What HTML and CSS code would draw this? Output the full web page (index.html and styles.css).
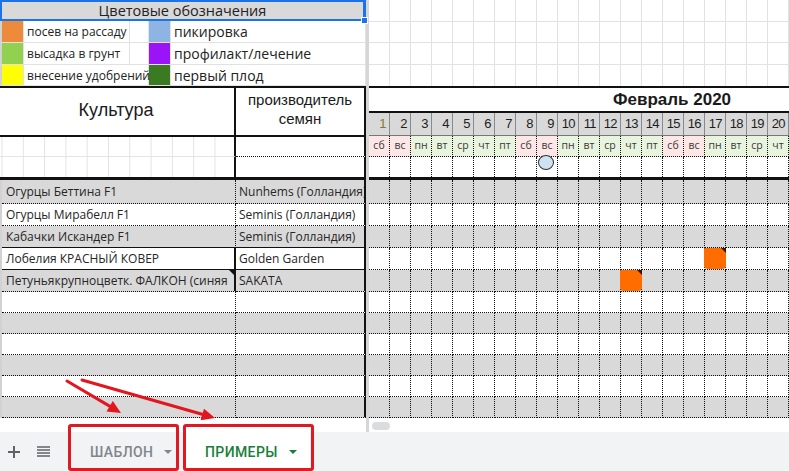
FILE: index.html
```html
<!DOCTYPE html>
<html lang="ru">
<head>
<meta charset="utf-8">
<title>Календарь посевов</title>
<link rel="stylesheet" href="styles.css">
</head>
<body>
<div class="sheet">
  <div class="left">
    <div class="lhead">Цветовые обозначения<span class="handle"></span></div>
    <div class="lrow h22"><span class="sw sw-orange"></span><span class="lt lt-cut">посев на рассаду</span><span class="sw sw-blue"></span><span class="lt2">пикировка</span></div>
    <div class="lrow h22"><span class="sw sw-green"></span><span class="lt lt-cut">высадка в грунт</span><span class="sw sw-purple"></span><span class="lt2">профилакт/лечение</span></div>
    <div class="lrow h21"><span class="sw sw-yellow"></span><span class="lt">внесение удобрений</span><span class="sw sw-dkgreen"></span><span class="lt2">первый плод</span></div>
    <div class="hdr"><div class="nm">Культура</div><div class="pd">производитель<br>семян</div></div>
    <div class="sub sub1"><div class="nm"></div><div class="pd"></div></div>
    <div class="sub sub2"><div class="nm"></div><div class="pd"></div></div>
    <div class="row gray r24"><div class="nm">Огурцы Беттина F1</div><div class="pd">Nunhems (Голландия)</div></div>
    <div class="row r22"><div class="nm">Огурцы Мирабелл F1</div><div class="pd">Seminis (Голландия)</div></div>
    <div class="row gray r22 solid-b"><div class="nm">Кабачки Искандер F1</div><div class="pd">Seminis (Голландия)</div></div>
    <div class="row r22 solid"><div class="nm">Лобелия КРАСНЫЙ КОВЕР</div><div class="pd">Golden Garden</div></div>
    <div class="row gray r22 solid-side"><div class="nm note-cell">Петуньякрупноцветк. ФАЛКОН (синяя</div><div class="pd">SAKATA</div></div>
    <div class="row r21"><div class="nm"></div><div class="pd"></div></div>
    <div class="row gray r21"><div class="nm"></div><div class="pd"></div></div>
    <div class="row r21"><div class="nm"></div><div class="pd"></div></div>
    <div class="row gray r21"><div class="nm"></div><div class="pd"></div></div>
    <div class="row r21"><div class="nm"></div><div class="pd"></div></div>
    <div class="row gray r21"><div class="nm"></div><div class="pd"></div></div>
  </div>
  <div class="divider"></div>
  <div class="right">
    <div class="grow blank h22"><i></i><i></i><i></i><i></i><i></i><i></i><i></i><i></i><i></i><i></i><i></i><i></i><i></i><i></i><i></i><i></i><i></i><i></i><i></i><i></i></div>
    <div class="grow blank h21"><i></i><i></i><i></i><i></i><i></i><i></i><i></i><i></i><i></i><i></i><i></i><i></i><i></i><i></i><i></i><i></i><i></i><i></i><i></i><i></i></div>
    <div class="grow blank h22"><i></i><i></i><i></i><i></i><i></i><i></i><i></i><i></i><i></i><i></i><i></i><i></i><i></i><i></i><i></i><i></i><i></i><i></i><i></i><i></i></div>
    <div class="grow blank h21 nob"><i></i><i></i><i></i><i></i><i></i><i></i><i></i><i></i><i></i><i></i><i></i><i></i><i></i><i></i><i></i><i></i><i></i><i></i><i></i><i></i></div>
    <div class="month"><span>Февраль 2020</span></div>
    <div class="grow days"><i class="first">1</i><i>2</i><i>3</i><i>4</i><i>5</i><i>6</i><i>7</i><i>8</i><i>9</i><i>10</i><i>11</i><i>12</i><i>13</i><i>14</i><i>15</i><i>16</i><i>17</i><i>18</i><i>19</i><i>20</i></div>
    <div class="grow wdays"><i class="we">сб</i><i class="we">вс</i><i>пн</i><i>вт</i><i>ср</i><i>чт</i><i>пт</i><i class="we">сб</i><i class="we">вс</i><i>пн</i><i>вт</i><i>ср</i><i>чт</i><i>пт</i><i class="we">сб</i><i class="we">вс</i><i>пн</i><i>вт</i><i>ср</i><i>чт</i></div>
    <div class="grow marks"><i></i><i></i><i></i><i></i><i></i><i></i><i></i><i></i><i><b class="dot"></b></i><i></i><i></i><i></i><i></i><i></i><i></i><i></i><i></i><i></i><i></i><i></i></div>
    <div class="grow data gray r24"><i></i><i></i><i></i><i></i><i></i><i></i><i></i><i></i><i></i><i></i><i></i><i></i><i></i><i></i><i></i><i></i><i></i><i></i><i></i><i></i></div>
    <div class="grow data r22"><i></i><i></i><i></i><i></i><i></i><i></i><i></i><i></i><i></i><i></i><i></i><i></i><i></i><i></i><i></i><i></i><i></i><i></i><i></i><i></i></div>
    <div class="grow data gray r22"><i></i><i></i><i></i><i></i><i></i><i></i><i></i><i></i><i></i><i></i><i></i><i></i><i></i><i></i><i></i><i></i><i></i><i></i><i></i><i></i></div>
    <div class="grow data r22"><i></i><i></i><i></i><i></i><i></i><i></i><i></i><i></i><i></i><i></i><i></i><i></i><i></i><i></i><i></i><i></i><i><b class="sow"></b></i><i></i><i></i><i></i></div>
    <div class="grow data gray r22"><i></i><i></i><i></i><i></i><i></i><i></i><i></i><i></i><i></i><i></i><i></i><i></i><i><b class="sow"></b></i><i></i><i></i><i></i><i></i><i></i><i></i><i></i></div>
    <div class="grow data r21"><i></i><i></i><i></i><i></i><i></i><i></i><i></i><i></i><i></i><i></i><i></i><i></i><i></i><i></i><i></i><i></i><i></i><i></i><i></i><i></i></div>
    <div class="grow data gray r21"><i></i><i></i><i></i><i></i><i></i><i></i><i></i><i></i><i></i><i></i><i></i><i></i><i></i><i></i><i></i><i></i><i></i><i></i><i></i><i></i></div>
    <div class="grow data r21"><i></i><i></i><i></i><i></i><i></i><i></i><i></i><i></i><i></i><i></i><i></i><i></i><i></i><i></i><i></i><i></i><i></i><i></i><i></i><i></i></div>
    <div class="grow data gray r21"><i></i><i></i><i></i><i></i><i></i><i></i><i></i><i></i><i></i><i></i><i></i><i></i><i></i><i></i><i></i><i></i><i></i><i></i><i></i><i></i></div>
    <div class="grow data r21"><i></i><i></i><i></i><i></i><i></i><i></i><i></i><i></i><i></i><i></i><i></i><i></i><i></i><i></i><i></i><i></i><i></i><i></i><i></i><i></i></div>
    <div class="grow data gray r21"><i></i><i></i><i></i><i></i><i></i><i></i><i></i><i></i><i></i><i></i><i></i><i></i><i></i><i></i><i></i><i></i><i></i><i></i><i></i><i></i></div>
  </div>
</div>
<div class="hscroll">
  <div class="hs-left"></div>
  <div class="divider"></div>
  <div class="hs-right"><span class="thumb"></span></div>
</div>
<div class="tabbar">
  <span class="icon plus"><svg width="12" height="12" viewBox="0 0 12 12"><path d="M6 0v12M0 6h12" stroke="#5f6368" stroke-width="2"/></svg></span>
  <span class="icon list"><svg width="13" height="11" viewBox="0 0 13 11"><path d="M0 1h13M0 4h13M0 7h13M0 10h13" stroke="#5f6368" stroke-width="1.6"/></svg></span>
  <div class="tab tab-off">ШАБЛОН<span class="caret"></span></div>
  <div class="tab tab-on">ПРИМЕРЫ<span class="caret"></span></div>
</div>
<div class="callout c1"></div>
<div class="callout c2"></div>
<svg class="arrows" width="789" height="471" viewBox="0 0 789 471">
  <g stroke="#e3161f" stroke-width="3" stroke-linecap="round" fill="#e3161f">
    <line x1="67" y1="381" x2="110" y2="406.4"/>
    <line x1="82" y1="380" x2="203" y2="414.5"/>
  </g>
  <g fill="#e3161f">
    <polygon points="121,413 106.5,411.5 112.8,401"/>
    <polygon points="215,418 200.6,420.2 204,408.8"/>
  </g>
</svg>
</body>
</html>
```
FILE: styles.css
```css
* { box-sizing: border-box; margin: 0; padding: 0; }
body {
  width: 789px; height: 471px; overflow: hidden; position: relative;
  background: #fff; color: #222;
  font-family: "Open Sans", "Noto Sans", sans-serif;
}
.sheet { display: flex; height: 419px; overflow: hidden; }
.left { width: 366px; flex: none; display: flex; flex-direction: column; }
.divider { width: 3px; flex: none; background: #d6d6d6; }
.right { width: 420px; flex: none; display: flex; flex-direction: column; }

/* legend */
.lhead {
  height: 21px; flex: none; position: relative;
  background: #d9d9d9; border: 2px solid #1a73e8; border-right-width: 3px;
  font-size: 14.5px; line-height: 17px; text-align: center; color: #222;
}
.handle {
  position: absolute; right: -5px; bottom: -5px; width: 7px; height: 7px;
  background: #1a73e8; border: 1px solid #fff;
}
.lrow {
  display: grid; grid-template-columns: 22px 125px 22px 1fr; flex: none;
  border-left: 2px solid #d2d2d2; border-bottom: 1px solid #e2e2e2;
}
.h22 { height: 22px; }
.h21 { height: 21px; }
.lrow > span { border-right: 1px solid #e2e2e2; white-space: nowrap; overflow: visible; display: flex; align-items: center; }
.lt { font-size: 12px; letter-spacing: 0; padding-left: 3px; position: relative; z-index: 1; }
.lt-cut { background: linear-gradient(to right, transparent 105px, #e2e2e2 105px, #e2e2e2 106px, transparent 106px); }
.lt2 { font-size: 14px; padding-left: 3px; }
.sw-orange { background: #ee8a3c; }
.sw-green { background: #92d050; }
.sw-yellow { background: #ffff00; }
.sw-blue { background: #8db4e2; }
.sw-purple { background: #9b14f7; }
.sw-dkgreen { background: #3a7a20; }

/* headers */
.hdr {
  height: 51px; flex: none; display: flex;
  border-top: 2px solid #111; border-bottom: 2px solid #111;
  font-family: "Liberation Sans", Arial, sans-serif; color: #1a1a1a;
}
.nm { width: 236px; flex: none; }
.pd { flex: 1; border-right: 2px solid #111; }
.hdr .nm { border-right: 2px solid #111; font-size: 18px; display: flex; align-items: center; justify-content: center; padding-right: 2px; padding-bottom: 3px; }
.hdr .pd { font-size: 15px; text-align: center; line-height: 19px; padding-top: 2px; }
.sub { flex: none; display: flex; }
.sub .nm {
  border-right: 2px solid #111;
  background-image: linear-gradient(to right, #e2e2e2 1px, transparent 1px);
  background-size: 21.3px 100%; background-position: 1.5px 0;
}
.sub1 { height: 20px; }
.sub1 .nm { border-bottom: 1px solid #e4e4e4; }
.sub1 .pd { border-bottom: 1px dotted #111; }
.sub2 { height: 23px; border-bottom: 3px solid #111; }

/* data rows (left) */
.row { flex: none; display: flex; font-size: 12px; color: #262626; border-left: 2px solid #d2d2d2; }
.row .nm, .row .pd {
  border-bottom: 1px dotted #111; white-space: nowrap; overflow: hidden;
  display: flex; align-items: center;
}
.row .nm { width: 234px; border-right: 1px dotted #111; padding-left: 4px; }
.row .pd { padding-left: 3px; }
.row.solid .nm { border-right: 2px solid #111; border-bottom: 1px solid #111; }
.row.solid .pd { border-bottom: 1px solid #111; }
.row.solid-b .nm { border-bottom: 1px solid #111; }
.row.solid-b .pd { border-bottom: 1px solid #111; }
.row.solid-side .nm { border-right: 2px solid #111; }
.note-cell { position: relative; }
.note-cell::after {
  content: ""; position: absolute; right: 0; top: 0;
  border-top: 5px solid #111; border-left: 5px solid transparent;
}
.gray { background: #d9d9d9; }
.r24 { height: 24px; }
.r22 { height: 22px; }
.r21 { height: 21px; }

/* right pane grid */
.grow { display: grid; grid-template-columns: repeat(20, 21px); flex: none; }
.grow i { font-style: normal; display: block; }
.blank i { border-right: 1px solid #e2e2e2; border-bottom: 1px solid #e2e2e2; }
.blank.nob i { border-bottom: 0; }
.month {
  height: 27px; flex: none; border-top: 2px solid #111; border-bottom: 2px solid #111;
  font-family: "Liberation Sans", Arial, sans-serif; font-weight: bold; font-size: 17px;
  display: flex; align-items: center; padding-left: 244px; color: #1a1a1a;
}
.days { height: 23px; background: #d9d9d9; border-bottom: 1px solid #777; }
.days i {
  border-right: 1px solid #8a8a8a; text-align: right; padding-right: 3px;
  font-family: "Liberation Sans", Arial, sans-serif; font-size: 13px; line-height: 22px;
  letter-spacing: -0.6px; color: #1d1d1d;
}
.days i.first { color: #8a7633; }
.wdays { height: 21px; }
.wdays i {
  background: #e9f4df; border-right: 1px dotted #111; border-bottom: 1px dotted #111;
  font-size: 10.5px; line-height: 19px; text-align: center; color: #3a3a3a;
}
.wdays i.we { background: #fde6e6; }
.marks { height: 23px; border-bottom: 3px solid #111; }
.marks i { border-right: 1px dotted #111; }
.dot {
  display: block; width: 16px; height: 15px; margin: -2px 0 0 1px;
  border-radius: 50%; background: #cfe2f3; border: 1px solid #333;
}
.data i { border-right: 1px dotted #111; border-bottom: 1px dotted #111; }
.sow {
  display: block; height: 100%; margin-left: -1px; margin-right: -1px;
  background: #ff6d00; border-radius: 1px 1px 4px 4px; position: relative;
}
.sow::after {
  content: ""; position: absolute; right: 0; top: 0;
  border-top: 5px solid #3a1300; border-left: 5px solid transparent;
}

/* scroll strip */
.hscroll { height: 13px; display: flex; background: #fff; }
.hs-left { width: 366px; flex: none; }
.hs-right { flex: 1; padding: 3px 0 0 3px; }
.thumb { display: block; width: 18px; height: 8px; border-radius: 4px; background: #dadce0; }

/* tab bar */
.tabbar {
  height: 39px; background: #f1f3f4; display: flex; align-items: stretch;
  font-family: Roboto, "Open Sans", sans-serif; font-weight: 500; font-size: 14px; letter-spacing: 0.4px;
}
.icon { display: flex; align-items: center; }
.plus { margin-left: 8px; }
.list { margin-left: 17px; }
.tab { display: flex; align-items: center; }
.tab-off { margin-left: 20px; width: 108px; padding-left: 20px; color: #80868b; }
.tab-on { margin-left: 8px; width: 124px; padding-left: 19px; background: #fff; color: #188038; }
.caret {
  margin-left: 11px; width: 0; height: 0;
  border-left: 4px solid transparent; border-right: 4px solid transparent; border-top: 4px solid currentColor;
}

/* annotations */
.callout { position: absolute; top: 424px; height: 47px; border: 3px solid #e01a22; border-radius: 3px; }
.c1 { left: 68px; width: 111px; }
.c2 { left: 183px; width: 131px; }
.arrows { position: absolute; left: 0; top: 0; pointer-events: none; }
```
